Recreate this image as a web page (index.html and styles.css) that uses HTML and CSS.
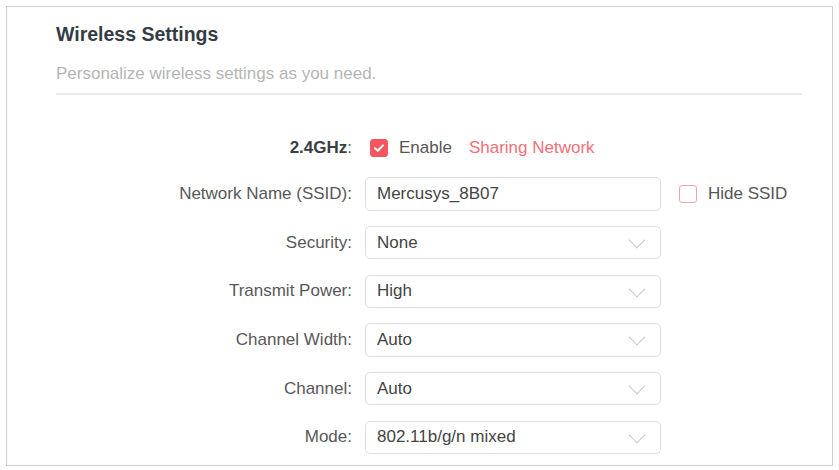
FILE: index.html
```html
<!DOCTYPE html>
<html lang="en">
<head>
    <meta charset="UTF-8">
    <title>Wireless Settings</title>
    <link rel="stylesheet" href="styles.css">
</head>
<body>
    <div class="panel">
        <div class="panel-head">
            <h1>Wireless Settings</h1>
            <p>Personalize wireless settings as you need.</p>
        </div>

        <div class="form">
            <div class="row row-band">
                <label class="label"><strong>2.4GHz</strong>:</label>
                <div class="control inline">
                    <span class="check checked">
                        <svg width="12" height="10" viewBox="0 0 12 10"><path d="M2 5.2 L4.8 7.8 L10 2.4" fill="none" stroke="#fff" stroke-width="2" stroke-linecap="round" stroke-linejoin="round"/></svg>
                    </span>
                    <span class="check-text">Enable</span>
                    <a class="link" href="#">Sharing Network</a>
                </div>
            </div>

            <div class="row">
                <label class="label">Network Name (SSID):</label>
                <div class="field">Mercusys_8B07</div>
                <div class="extra">
                    <span class="check"></span>
                    <span class="check-text">Hide SSID</span>
                </div>
            </div>

            <div class="row">
                <label class="label">Security:</label>
                <div class="field select">None<span class="chevron"></span></div>
            </div>

            <div class="row">
                <label class="label">Transmit Power:</label>
                <div class="field select">High<span class="chevron"></span></div>
            </div>

            <div class="row">
                <label class="label">Channel Width:</label>
                <div class="field select">Auto<span class="chevron"></span></div>
            </div>

            <div class="row">
                <label class="label">Channel:</label>
                <div class="field select">Auto<span class="chevron"></span></div>
            </div>

            <div class="row">
                <label class="label">Mode:</label>
                <div class="field select">802.11b/g/n mixed<span class="chevron"></span></div>
            </div>
        </div>
    </div>
</body>
</html>
```

FILE: styles.css
```css
body {
    margin: 0;
    background: #fff;
    font-family: "Liberation Sans", Arial, sans-serif;
    color: #555;
}

.panel {
    margin: 6px;
    height: 460px;
    box-sizing: border-box;
    border: 1px solid #cdcdcd;
    padding: 15px 30px 0 49px;
    overflow: hidden;
}

.panel-head {
    border-bottom: 2px solid #ebebeb;
    padding-bottom: 8px;
}

.panel-head h1 {
    margin: 0;
    font-size: 19.5px;
    line-height: 24px;
    font-weight: 700;
    color: #343d46;
}

.panel-head p {
    margin: 17px 0 0 0;
    font-size: 17px;
    line-height: 22px;
    color: #b5b5b5;
}

.form {
    margin-top: 36px;
    display: flex;
    flex-direction: column;
    gap: 15.2px;
}

.row {
    display: grid;
    grid-template-columns: 296px 296px auto;
    column-gap: 13px;
    align-items: center;
    height: 33.5px;
    font-size: 17px;
}

.row-band {
    margin-bottom: -2.5px;
}

.label {
    text-align: right;
    color: #585858;
}

.label strong {
    color: #3a3f44;
}

.inline {
    display: flex;
    align-items: center;
    padding-left: 5px;
}

.check {
    width: 18px;
    height: 18px;
    box-sizing: border-box;
    border: 1.5px solid #f2a2aa;
    border-radius: 3px;
    display: inline-flex;
    align-items: center;
    justify-content: center;
    flex: none;
}

.check.checked {
    background: #f2575f;
    border-color: #f2575f;
}

.check-text {
    margin-left: 11px;
    color: #555;
}

.link {
    margin-left: 17px;
    color: #f2707a;
    text-decoration: none;
}

.field {
    height: 33.5px;
    box-sizing: border-box;
    border: 1px solid #dedede;
    border-radius: 5px;
    padding: 0 11px;
    display: flex;
    align-items: center;
    color: #444;
    position: relative;
}

.chevron {
    position: absolute;
    right: 17px;
    top: 7px;
    width: 11px;
    height: 11px;
    border-right: 1.5px solid #c8c8c8;
    border-bottom: 1.5px solid #c8c8c8;
    transform: rotate(45deg);
}

.extra {
    display: flex;
    align-items: center;
    margin-left: 5px;
}
```
